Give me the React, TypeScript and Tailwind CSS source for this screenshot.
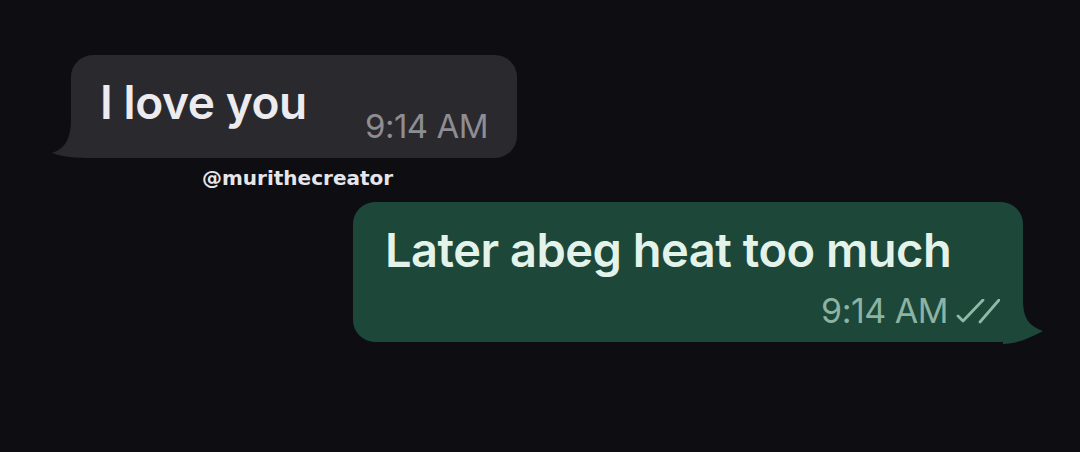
import React from "react";

export default function App() {
  return (
    <div className="w-[1080px] h-[452px] bg-[#0e0d11] flex flex-col overflow-hidden" style={{ fontFamily: 'Inter, "Liberation Sans", Arial, sans-serif' }}>
      {/* incoming bubble */}
      <div className="relative ml-[71px] mt-[55px] w-[446px] h-[103px] rounded-[22px] bg-[#2a292e] pt-[24px] pl-[29px] pr-[29px] flex justify-between">
        <svg className="absolute left-[-19px] top-[63px]" width="40" height="40" viewBox="0 0 40 40">
          <path d="M19 0 C19 20 14 30 0 35 C10 39 24 40 40 40 L40 0 Z" fill="#2a292e" />
        </svg>
        <span className="relative text-[46px] leading-none font-semibold text-[#ecebf0] tracking-[-0.4px]">I love you</span>
        <span className="relative mt-[31px] text-[33px] leading-none text-[#8e8d93] tracking-[-0.5px]">9:14 AM</span>
      </div>

      {/* watermark */}
      <div className="ml-[202px] mt-[10px] text-[20px] leading-none font-bold text-[#e6e6ea]" style={{ fontFamily: '"DejaVu Sans", sans-serif' }}>
        @murithecreator
      </div>

      {/* outgoing bubble */}
      <div className="relative ml-[353px] mt-[14px] w-[670px] h-[140px] rounded-[22px] bg-[#1c4739] pt-[24px] pl-[32px] pr-[23px] flex flex-col">
        <svg className="absolute right-[-20px] top-[98px]" width="40" height="44" viewBox="0 0 40 44">
          <path d="M20 0 C20 18 26 26 40 31 C30 36 16 44 0 44 L0 0 Z" fill="#1c4739" />
        </svg>
        <span className="relative text-[47px] leading-none font-semibold text-[#e3f3ea] tracking-[-0.5px]">Later abeg heat too much</span>
        <div className="relative mt-[21px] flex items-center justify-end gap-[8px]">
          <span className="text-[34px] leading-none text-[#8db3a2] tracking-[-0.5px]">9:14 AM</span>
          <svg width="44" height="26" viewBox="0 0 44 26" className="mt-[1px]">
            <path d="M2 17 L7 22 L27 1" fill="none" stroke="#8fbaa8" strokeWidth="2.8" strokeLinecap="round" strokeLinejoin="round" />
            <path d="M24 23 L43 1" fill="none" stroke="#8fbaa8" strokeWidth="2.8" strokeLinecap="round" />
          </svg>
        </div>
      </div>
    </div>
  );
}
